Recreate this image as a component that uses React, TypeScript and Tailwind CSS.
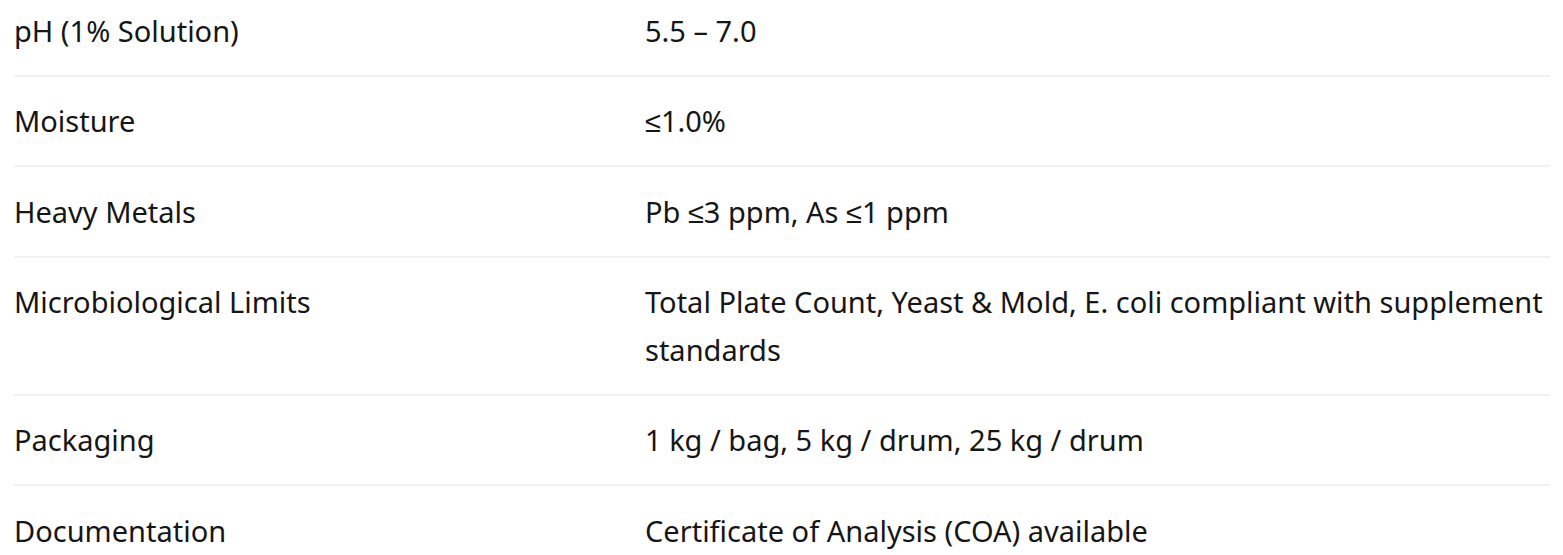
const specs = [
    { label: 'pH (1% Solution)', value: '5.5 – 7.0' },
    { label: 'Moisture', value: '≤1.0%' },
    { label: 'Heavy Metals', value: 'Pb ≤3 ppm, As ≤1 ppm' },
    { label: 'Microbiological Limits', value: 'Total Plate Count, Yeast & Mold, E. coli compliant with supplement standards' },
    { label: 'Packaging', value: '1 kg / bag, 5 kg / drum, 25 kg / drum' },
    { label: 'Documentation', value: 'Certificate of Analysis (COA) available' },
];

export default function App() {
    return (
        <div className="bg-white min-h-screen overflow-hidden px-[14px] font-['Noto_Sans','Liberation_Sans',sans-serif] text-[29px] leading-[47.5px] text-[#161616]">
            <div className="mt-[-14px] w-[1536px]">
                {specs.map((spec, i) => (
                    <div
                        key={spec.label}
                        className={`flex py-[20.5px] ${i < specs.length - 1 ? 'border-b-2 border-[#f1f1f1]' : ''}`}
                    >
                        <div className="w-[631px] shrink-0">{spec.label}</div>
                        <div className="flex-1">{spec.value}</div>
                    </div>
                ))}
            </div>
        </div>
    );
}
